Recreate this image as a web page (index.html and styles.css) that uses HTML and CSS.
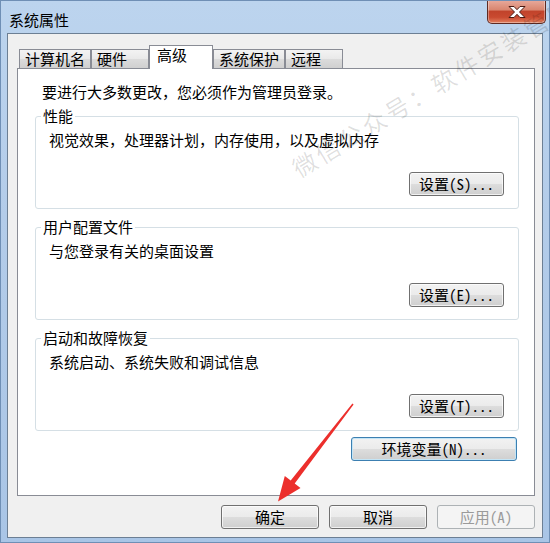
FILE: index.html
```html
<!DOCTYPE html>
<html lang="zh-CN">
<head>
  <meta charset="UTF-8" />
  <title>系统属性</title>
  <link rel="stylesheet" href="styles.css">
</head>

<body>
  <div class="window">
    <div class="titlebar">
      <span class="title">系统属性</span>
      <button class="close" aria-label="关闭">
        <svg width="20" height="14" viewBox="0 0 20 14">
          <path d="M2 1.5h5l3 3.2 3-3.2h5l-5.5 5.5 5.5 5.5h-5l-3-3.2-3 3.2h-5l5.5-5.5z" fill="#fff" stroke="#4a1a12" stroke-width="1" stroke-linejoin="round"/>
        </svg>
      </button>
    </div>

    <div class="client">
      <div class="tabs">
        <div class="tab">计算机名</div>
        <div class="tab">硬件</div>
        <div class="tab active">高级</div>
        <div class="tab">系统保护</div>
        <div class="tab">远程</div>
      </div>

      <div class="panel">
        <p class="note">要进行大多数更改，您必须作为管理员登录。</p>

        <fieldset class="group">
          <legend>性能</legend>
          <p>视觉效果，处理器计划，内存使用，以及虚拟内存</p>
          <div class="row"><button class="btn">设置(S)...</button></div>
        </fieldset>

        <fieldset class="group">
          <legend>用户配置文件</legend>
          <p>与您登录有关的桌面设置</p>
          <div class="row"><button class="btn">设置(E)...</button></div>
        </fieldset>

        <fieldset class="group">
          <legend>启动和故障恢复</legend>
          <p>系统启动、系统失败和调试信息</p>
          <div class="row"><button class="btn">设置(T)...</button></div>
        </fieldset>

        <div class="row env"><button class="btn default">环境变量(N)...</button></div>
      </div>

      <div class="actions">
        <button class="btn">确定</button>
        <button class="btn">取消</button>
        <button class="btn" disabled>应用(A)</button>
      </div>
    </div>

    <!-- overlays from the screenshot -->
    <div class="watermark">微信公众号：软件安装管家</div>
    <svg class="arrow" width="550" height="543" viewBox="0 0 550 543">
      <polygon points="351.4,402.6 289.7,479.5 283.8,475 277,500.5 299.5,487 293.7,482.5 352.6,403.4" fill="#ec2f2c"/>
    </svg>
  </div>
</body>
</html>
```

FILE: styles.css
```css
* {
  box-sizing: border-box;
}
body {
  margin: 0;
  font-family: "Noto Sans Mono CJK SC", "Noto Sans CJK SC", sans-serif;
  font-size: 15px;
  color: #000;
}
.window {
  position: relative;
  overflow: hidden;
  width: 550px;
  height: 543px;
  display: flex;
  flex-direction: column;
  padding: 0 6px 4px 6px;
  border: 1px solid #6f8fb5;
  background: linear-gradient(#bcd4ee, #b3cce9 40%, #a9c5e6);
}
.titlebar {
  height: 32px;
  display: flex;
  align-items: flex-start;
  justify-content: space-between;
}
.title {
  padding: 9px 0 0 2px;
  line-height: 20px;
}
.close {
  width: 59px;
  height: 24px;
  margin: -1px -3px 0 0;
  padding: 0;
  display: flex;
  align-items: center;
  justify-content: center;
  border: 1px solid #5e2a22;
  border-top: none;
  border-radius: 0 0 5px 5px;
  background: linear-gradient(#e8ab9d, #d98670 42%, #c1432b 50%, #c94a30 75%, #e2805f);
  box-shadow: inset 0 0 0 1px rgba(255,255,255,0.35);
}
.client {
  flex: 1;
  display: flex;
  flex-direction: column;
  padding: 11px 7px 8px 9px;
  border: 1px solid #6c7f94;
  background: #f0f0f0;
}
.tabs {
  position: relative;
  z-index: 1;
  height: 23px;
  display: flex;
  align-items: flex-end;
  padding-left: 2px;
}
.tab {
  min-width: 58px;
  height: 19px;
  padding: 0 5px;
  line-height: 17px;
  border: 1px solid #898c95;
  border-bottom: none;
  background: linear-gradient(#f3f3f3, #e9e9e9 50%, #dcdcdc 50%, #d0d0d0);
  white-space: nowrap;
}
.tab.active {
  min-width: 64px;
  height: 24px;
  margin-bottom: -1px;
  padding-left: 7px;
  background: #fff;
}
.panel {
  height: 428px;
  padding: 13px 15px 0 17px;
  border: 1px solid #898c95;
  background: #fff;
}
.panel p {
  margin: 0;
  line-height: 20px;
}
.note {
  padding-left: 7px;
  margin-bottom: 6px !important;
}
.group {
  margin: 0 0 10px 0;
  padding: 6px 14px 12px 5px;
  border: 1px solid #d5dfe5;
  border-radius: 3px;
}
.group legend {
  padding: 0 2px;
  line-height: 16px;
}
.group p {
  padding-left: 8px;
}
.row {
  display: flex;
  justify-content: flex-end;
  margin-top: 22px;
}
.btn {
  width: 95px;
  height: 24px;
  padding: 0;
  font: inherit;
  line-height: 20px;
  color: #000;
  border: 1px solid #707070;
  border-radius: 3px;
  background: linear-gradient(#f2f2f2, #ebebeb 50%, #dddddd 50%, #cfcfcf);
  box-shadow: inset 0 0 0 1px rgba(255,255,255,0.7);
}
.env {
  margin-top: -4px;
  padding-right: 2px;
}
.btn.default {
  width: 166px;
  border-color: #3c7fb1;
  box-shadow: inset 0 0 0 1px #c4e5f6;
}
.actions {
  display: flex;
  justify-content: flex-end;
  gap: 10px;
  margin-top: 9px;
}
.actions .btn {
  width: 98px;
}
.btn:disabled {
  color: #9a9a9a;
  border-color: #adb2b5;
  background: #f4f4f4;
  box-shadow: none;
}
.watermark {
  position: absolute;
  left: 293px;
  top: 157px;
  line-height: 24px;
  font-family: "Noto Sans CJK SC", sans-serif;
  font-size: 24px;
  letter-spacing: 3px;
  white-space: nowrap;
  color: rgba(0, 0, 0, 0.13);
  transform-origin: 0 50%;
  transform: rotate(-31deg);
  pointer-events: none;
}
.arrow {
  position: absolute;
  left: 0;
  top: 0;
  pointer-events: none;
}
```
